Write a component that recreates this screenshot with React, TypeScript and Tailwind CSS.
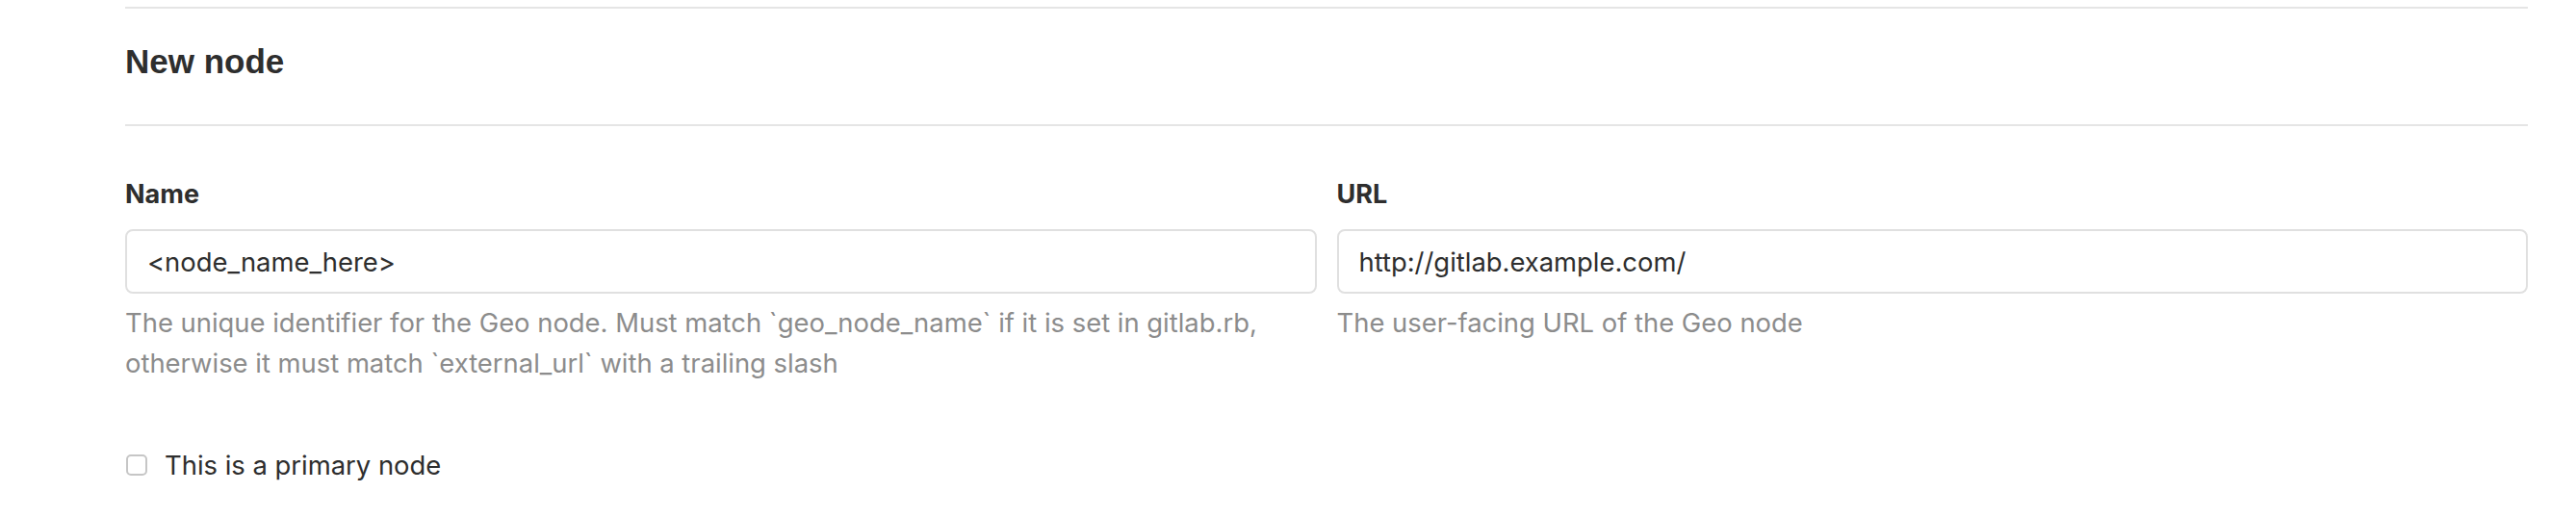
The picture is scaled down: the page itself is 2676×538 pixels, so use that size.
import React from "react";

const fieldClass =
    "w-full h-[67px] rounded-[8px] border-2 border-[#e0e0e0] bg-white px-[21px] text-[27.4px] text-[#2e2e2e] outline-none";

export default function App() {
    return (
        <div className="w-full h-[538px] bg-white font-['Inter',sans-serif] text-[#2e2e2e] overflow-hidden">
            <div className="pl-[130px] pr-[50px]">
                <div className="mt-[7px] h-[2px] bg-[#e5e5e5]"></div>

                <h3 className="mt-[34px] font-['Liberation_Sans',Arial,sans-serif] text-[35px] leading-[42px] font-bold text-[#2e2e2e]">
                    New node
                </h3>

                <div className="mt-[44px] h-[2px] bg-[#e5e5e5]"></div>

                {/* Name / URL */}
                <div className="mt-[53px] grid grid-cols-2 gap-[21px]">
                    <div>
                        <label className="block text-[27px] leading-[36px] font-bold">Name</label>
                        <input className={`mt-[18px] ${fieldClass}`} defaultValue="<node_name_here>" />
                        <p className="mt-[9px] text-[27.4px] leading-[42px] text-[#8c8c8c]">
                            The unique identifier for the Geo node. Must match `geo_node_name` if it is set in gitlab.rb, otherwise it must match `external_url` with a trailing slash
                        </p>
                    </div>
                    <div>
                        <label className="block text-[27px] leading-[36px] font-bold">URL</label>
                        <input className={`mt-[18px] ${fieldClass}`} defaultValue="http://gitlab.example.com/" />
                        <p className="mt-[9px] text-[27.4px] leading-[42px] text-[#8c8c8c]">
                            The user-facing URL of the Geo node
                        </p>
                    </div>
                </div>

                {/* Primary checkbox */}
                <label className="mt-[64px] flex items-center gap-[18px] text-[27.4px] leading-[42px]">
                    <span className="block w-[22px] h-[22px] rounded-[5px] border-2 border-[#c6c6c6] bg-white ml-px"></span>
                    This is a primary node
                </label>
            </div>
        </div>
    );
}
